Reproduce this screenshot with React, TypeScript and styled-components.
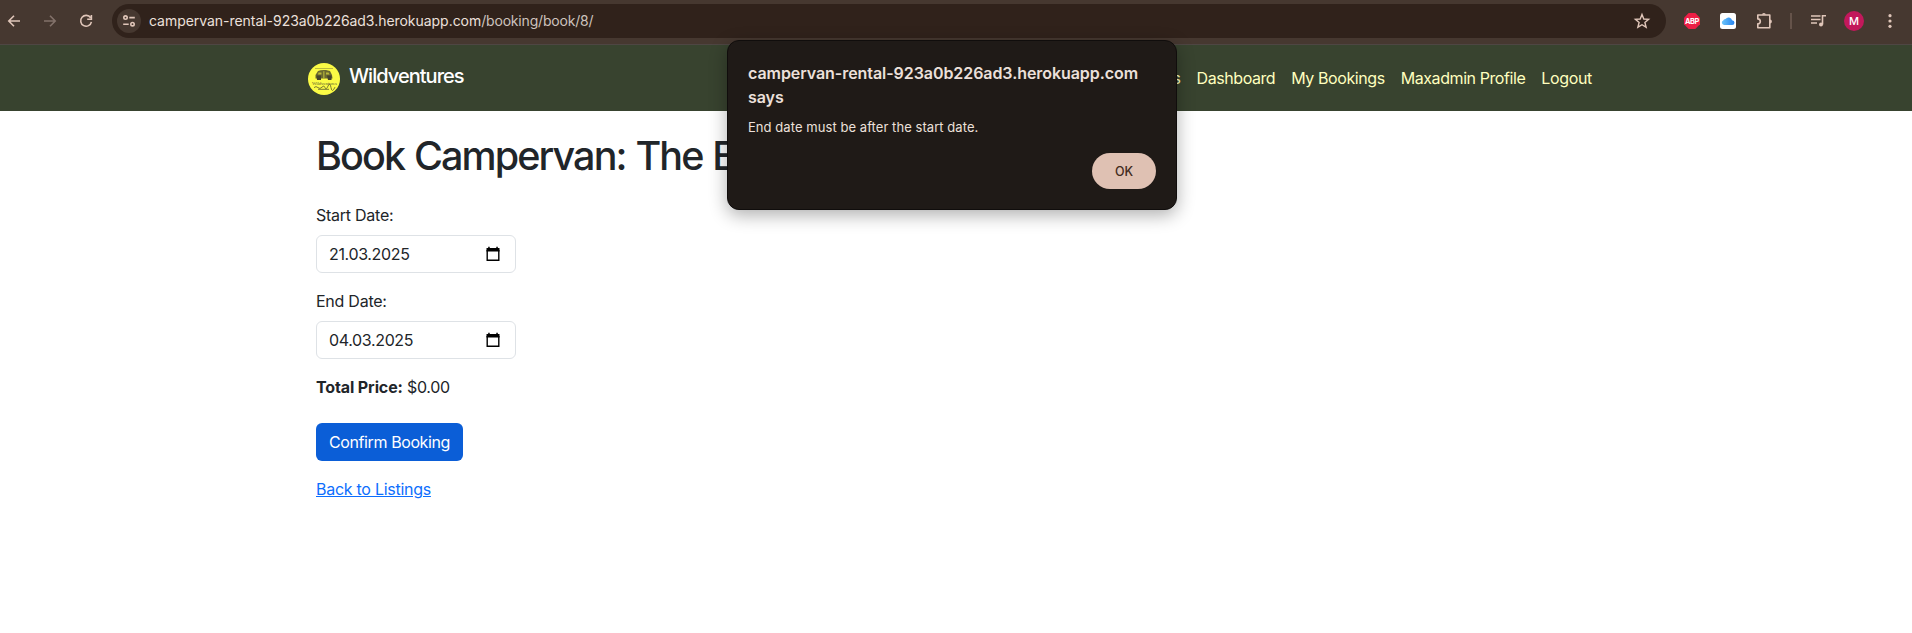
import React from "react";
import styled, { createGlobalStyle } from "styled-components";

const GlobalStyle = createGlobalStyle`
  *, *::before, *::after { box-sizing: border-box; }
  body {
    margin: 0;
    background: #fff;
    color: #212529;
    font-family: Inter, "Liberation Sans", sans-serif;
    font-size: 16px;
    line-height: 24px;
    overflow: hidden;
  }
`;

const Page = styled.div`
  height: 633px;
  display: flex;
  flex-direction: column;
`;

const Toolbar = styled.header`
  height: 45px;
  background: #463830;
  border-bottom: 1px solid #4e4643;
  display: flex;
  align-items: center;
  padding: 0 14px 2px 6px;
`;

const ToolIcon = styled.svg<{ $gap?: number; $dim?: boolean }>`
  flex: none;
  display: block;
  overflow: visible;
  margin-right: ${(p) => p.$gap ?? 0}px;
  color: ${(p) => (p.$dim ? "#83726a" : "#e0c6b9")};
  fill: none;
  stroke: currentColor;
  stroke-width: 1.6;
`;

const AddressBar = styled.div`
  flex: 1;
  height: 34px;
  border-radius: 17px;
  background: #30221b;
  display: flex;
  align-items: center;
  padding: 0 16px 0 5px;
  margin-right: 18px;
`;

const SiteInfo = styled.div`
  width: 24px;
  height: 24px;
  border-radius: 50%;
  background: #463830;
  display: flex;
  align-items: center;
  justify-content: center;
  margin-right: 8px;
`;

const Url = styled.div`
  flex: 1;
  font-size: 14px;
  letter-spacing: -0.18px;
  color: #cdc3be;
  white-space: nowrap;
`;

const Host = styled.span`
  color: #ece0db;
  letter-spacing: -0.04px;
`;

const Divider = styled.div`
  width: 2px;
  height: 16px;
  background: #65534a;
  margin-right: 18px;
`;

const Avatar = styled.div`
  width: 20px;
  height: 20px;
  border-radius: 50%;
  background: #c2185b;
  color: #fff;
  font-size: 11px;
  font-weight: 500;
  line-height: 20px;
  text-align: center;
  margin-right: 18px;
`;

const Navbar = styled.nav`
  height: 66px;
  background: #38432f;
  display: flex;
  align-items: center;
  justify-content: space-between;
  padding: 0 320px 0 308px;
`;

const Brand = styled.div`
  display: flex;
  align-items: center;
  gap: 9px;
  padding-top: 2px;
  color: #fff;
  font-size: 20px;
  font-weight: 500;
  letter-spacing: -0.97px;
`;

const BrandName = styled.span`
  margin-top: -6px;
`;

const NavLinks = styled.div`
  display: flex;
  gap: 16px;
`;

const NavLink = styled.a<{ $spacing?: number }>`
  color: #ffffbf;
  letter-spacing: ${(p) => p.$spacing ?? -0.42}px;
`;

const Content = styled.main`
  padding: 21px 316px 0;
  display: flex;
  flex-direction: column;
  align-items: flex-start;
`;

const Heading = styled.h1`
  margin: 0 0 23px;
  font-size: 39.5px;
  line-height: 48px;
  font-weight: 500;
  letter-spacing: -1.9px;
  word-spacing: 1.2px;
  white-space: nowrap;
`;

const Label = styled.label`
  margin-bottom: 8px;
  letter-spacing: -0.25px;
`;

const DateField = styled.div`
  width: 200px;
  height: 38px;
  border: 1px solid #dee2e6;
  border-radius: 6px;
  padding: 0 15px 0 12px;
  margin-bottom: 16px;
  display: flex;
  align-items: center;
  justify-content: space-between;
  letter-spacing: -0.35px;
`;

const Total = styled.p`
  margin: 0 0 24px;
  letter-spacing: -0.3px;
`;

const TotalLabel = styled.strong`
  letter-spacing: -0.12px;
`;

const ConfirmButton = styled.button`
  width: 147px;
  height: 38px;
  border: 0;
  border-radius: 6px;
  padding: 0;
  background: #0b5ed7;
  color: #fff;
  font: inherit;
  letter-spacing: -0.4px;
  margin-bottom: 16px;
`;

const BackLink = styled.a`
  color: #0d6efd;
  text-decoration: underline;
  letter-spacing: -0.27px;
`;

const Dialog = styled.div`
  position: absolute;
  left: 727px;
  top: 40px;
  width: 450px;
  height: 170px;
  border: 1px solid #100d0c;
  border-radius: 12px;
  background: #1f1a17;
  box-shadow: 0 5px 18px rgba(0, 0, 0, 0.32);
  padding: 20px;
  color: #ece0db;
  display: flex;
  flex-direction: column;
`;

const DialogTitle = styled.div`
  font-size: 16px;
  font-weight: 600;
  line-height: 24px;
  letter-spacing: -0.06px;
`;

const DialogText = styled.div`
  font-size: 13px;
  line-height: 20px;
  letter-spacing: 0.06px;
  margin-top: 8px;
`;

const OkButton = styled.button`
  margin-top: auto;
  align-self: flex-end;
  width: 64px;
  height: 36px;
  border: 0;
  border-radius: 18px;
  background: #dfc1b3;
  color: #432b20;
  font: 500 12.5px Inter, sans-serif;
`;

const CalendarIcon = () => (
  <svg width="14" height="16" viewBox="0 0 14 16">
    <path d="M1.2 4V14.3H12.8V4" fill="none" stroke="#000" strokeWidth="1.4" />
    <path d="M0.5 2H13.5V5.4H0.5ZM2.2 0.7H3.7V3H2.2ZM10.3 0.7H11.8V3H10.3Z" fill="#000" />
  </svg>
);

const Logo = () => (
  <svg width="32" height="32" viewBox="0 0 32 32">
    <circle cx="16" cy="16" r="16" fill="#fbfb45" />
    <path d="M7 5.5H25" stroke="#a9a83b" strokeWidth="0.8" />
    <path d="M10 8Q13 6.5 18 7L22 8L24 12L24.5 15.5H7.5V12Z" fill="#6a692f" />
    <path d="M8.5 12.5H13V17H9ZM19 12.5H23.5V17H20Z" fill="#45442a" />
    <path d="M10.5 9.5H13.5V11.5H10ZM15.3 8.3H16.4V15.5H15.3ZM18 9.5H20.5L21.5 11.5H18Z" fill="#b9b83b" />
    <text x="4" y="21.5" fontSize="5" textLength="24" fontFamily="Liberation Serif, serif" fill="#65642f">Wildventures</text>
    <path d="M6 24.6q2-2 4 0t4-.5 3 .5 3-1.5 3 1.5 4-.5M10 26.3h11" fill="none" stroke="#6b6a30" strokeWidth="0.9" />
  </svg>
);

export default function App() {
  return (
    <Page>
      <GlobalStyle />
      <Toolbar>
        <ToolIcon width="16" height="16" viewBox="0 0 16 16" $gap={20}>
          <path d="M14 8H3M8 2.8L2.8 8 8 13.2" />
        </ToolIcon>
        <ToolIcon width="16" height="16" viewBox="0 0 16 16" $gap={20} $dim>
          <path d="M2 8H13M8 2.8L13.2 8 8 13.2" />
        </ToolIcon>
        <ToolIcon width="16" height="16" viewBox="0 0 16 16" $gap={18}>
          <path d="M12.6 4.8A5.4 5.4 0 1 0 13.4 8.8M13.4 2V6.2H9.2" />
        </ToolIcon>
        <AddressBar>
          <SiteInfo>
            <ToolIcon width="14" height="14" viewBox="0 0 14 14">
              <circle cx="3.5" cy="3.6" r="1.7" />
              <path d="M7.3 3.6H12.8M1.2 10.2H6.7" />
              <circle cx="10.5" cy="10.2" r="1.7" />
            </ToolIcon>
          </SiteInfo>
          <Url>
            <Host>campervan-rental-923a0b226ad3.herokuapp.com</Host>/booking/book/8/
          </Url>
          <ToolIcon width="16" height="16" viewBox="0 0 16 16">
            <path d="M8 1.5L9.8 6 14.6 6.4 10.9 9.5 12.1 14.2 8 11.7 3.9 14.2 5.1 9.5 1.4 6.4 6.2 6Z" strokeWidth="1.4" />
          </ToolIcon>
        </AddressBar>
        <ToolIcon width="16" height="16" viewBox="0 0 16 16" $gap={20}>
          <path d="M4.7 0H11.3L16 4.7V11.3L11.3 16H4.7L0 11.3V4.7Z" fill="#ed1e45" stroke="none" />
          <text x="8" y="10.8" fontSize="7.4" fontWeight="700" textAnchor="middle" letterSpacing="-0.4" fill="#fff" stroke="none">ABP</text>
        </ToolIcon>
        <ToolIcon width="16" height="16" viewBox="0 0 16 16" $gap={20}>
          <defs>
            <linearGradient id="cloud" x1="0" y1="0" x2="1" y2="0">
              <stop offset="0" stopColor="#6cc5fa" />
              <stop offset="1" stopColor="#2583f0" />
            </linearGradient>
          </defs>
          <rect width="16" height="16" rx="2.5" fill="#fff" stroke="none" />
          <path d="M4 12A2.3 2.3 0 0 1 3.2 7.6 2.3 2.3 0 0 1 5.5 6 3.7 3.7 0 0 1 12.1 7.2 2.4 2.4 0 0 1 12 12Z" fill="url(#cloud)" stroke="none" />
        </ToolIcon>
        <ToolIcon width="18" height="18" viewBox="0 0 18 18" $gap={16}>
          <path d="M1.8 3H13.8V15.8H1.8V11.9Q4.3 11.6 4.3 9.4T1.8 6.9Z" strokeLinejoin="round" />
          <path d="M6 2.8A1.9 1.9 0 0 1 9.8 2.8ZM14 7.6A1.9 1.9 0 0 1 14 11.4Z" fill="currentColor" stroke="none" />
        </ToolIcon>
        <Divider />
        <ToolIcon width="18" height="18" viewBox="0 0 18 18" $gap={16}>
          <path d="M1 4H10.5M1 7.5H10.5M1 11H7M12.5 12.5V3.8H16" />
          <circle cx="11" cy="12.5" r="2" fill="currentColor" stroke="none" />
        </ToolIcon>
        <Avatar>M</Avatar>
        <ToolIcon width="16" height="16" viewBox="0 0 16 16">
          <circle cx="8" cy="2.7" r="1.6" fill="currentColor" stroke="none" />
          <circle cx="8" cy="8" r="1.6" fill="currentColor" stroke="none" />
          <circle cx="8" cy="13.3" r="1.6" fill="currentColor" stroke="none" />
        </ToolIcon>
      </Toolbar>
      <Navbar>
        <Brand>
          <Logo />
          <BrandName>Wildventures</BrandName>
        </Brand>
        <NavLinks>
          <NavLink>Vans</NavLink>
          <NavLink>Dashboard</NavLink>
          <NavLink>My Bookings</NavLink>
          <NavLink>Maxadmin Profile</NavLink>
          <NavLink $spacing={-0.35}>Logout</NavLink>
        </NavLinks>
      </Navbar>
      <Content>
        <Heading>Book Campervan: The E</Heading>
        <Label>Start Date:</Label>
        <DateField>
          21.03.2025
          <CalendarIcon />
        </DateField>
        <Label>End Date:</Label>
        <DateField>
          04.03.2025
          <CalendarIcon />
        </DateField>
        <Total>
          <TotalLabel>Total Price:</TotalLabel> $0.00
        </Total>
        <ConfirmButton>Confirm Booking</ConfirmButton>
        <BackLink>Back to Listings</BackLink>
      </Content>
      <Dialog>
        <DialogTitle>campervan-rental-923a0b226ad3.herokuapp.com says</DialogTitle>
        <DialogText>End date must be after the start date.</DialogText>
        <OkButton>OK</OkButton>
      </Dialog>
    </Page>
  );
}
